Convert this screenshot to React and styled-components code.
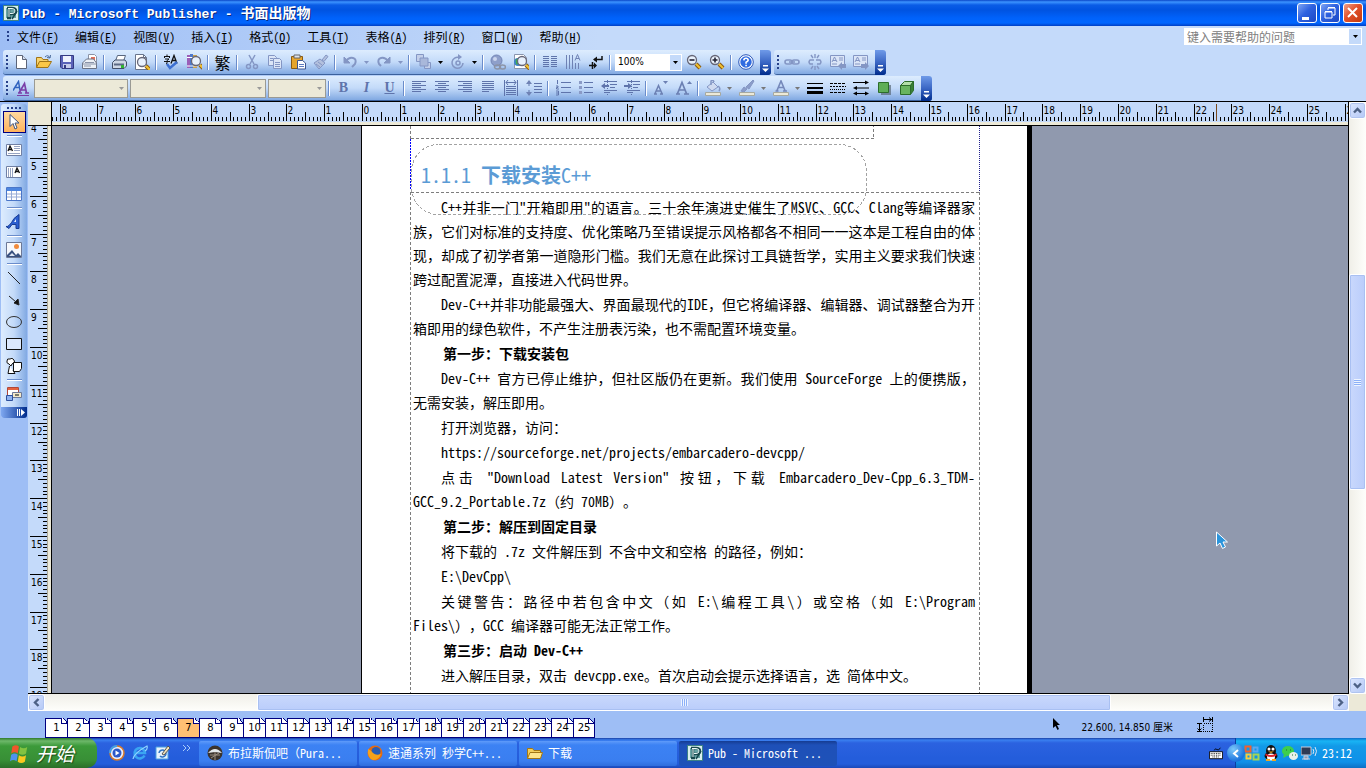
import React from 'react'
import styled, { createGlobalStyle, css } from 'styled-components'

/*=====================================================
Publisher window: title, menus, toolbars, page, taskbar
=====================================================*/

const cjk = '"Noto Sans CJK SC", sans-serif'
const tahoma = '"DejaVu Sans Condensed", "DejaVu Sans", "Noto Sans CJK SC", sans-serif'

const CM = 37.8

const menus = [
  ['文件', 'F'], ['编辑', 'E'], ['视图', 'V'], ['插入', 'I'], ['格式', 'O'],
  ['工具', 'T'], ['表格', 'A'], ['排列', 'R'], ['窗口', 'W'], ['帮助', 'H'],
]

//each paragraph is a list of lines, lines that end in | are justified
const paragraphs = [
  { lines: ['C++并非一门"开箱即用"的语言。三十余年演进史催生了MSVC、GCC、Clang等编译器家|', '族，它们对标准的支持度、优化策略乃至错误提示风格都各不相同一一这本是工程自由的体|', '现，却成了初学者第一道隐形门槛。我们无意在此探讨工具链哲学，实用主义要求我们快速|', '跨过配置泥潭，直接进入代码世界。'] },
  { lines: ['Dev-C++并非功能最强大、界面最现代的IDE，但它将编译器、编辑器、调试器整合为开|', '箱即用的绿色软件，不产生注册表污染，也不需配置环境变量。'] },
  { bold: true, lines: ['第一步：下载安装包'] },
  { lines: ['Dev-C++ 官方已停止维护，但社区版仍在更新。我们使用 SourceForge 上的便携版，|', '无需安装，解压即用。'] },
  { lines: ['打开浏览器，访问：'] },
  { lines: ['https://sourceforge.net/projects/embarcadero-devcpp/'] },
  { lines: ['点击 "Download Latest Version" 按钮，下载 Embarcadero_Dev-Cpp_6.3_TDM-|', 'GCC_9.2_Portable.7z（约 70MB）。'] },
  { bold: true, lines: ['第二步：解压到固定目录'] },
  { lines: ['将下载的 .7z 文件解压到 不含中文和空格 的路径，例如：'] },
  { lines: ['E:\\DevCpp\\'] },
  { lines: ['关键警告：路径中若包含中文（如 E:\\编程工具\\）或空格（如 E:\\Program|', 'Files\\），GCC 编译器可能无法正常工作。'] },
  { bold: true, lines: ['第三步：启动 Dev-C++'] },
  { lines: ['进入解压目录，双击 devcpp.exe。首次启动会提示选择语言，选 简体中文。'] },
]

const pages = Array.from({ length: 25 }, (_, i) => i + 1)

const GlobalStyle = createGlobalStyle`
  * { box-sizing: border-box; }
  body { margin: 0; overflow: hidden; }
  button, input, select {
    font: inherit;
    color: inherit;
    margin: 0;
    padding: 0;
    border: 0;
    border-radius: 0;
    background: none;
  }
  svg { display: block; flex: none; }
`

/*=====================================================
icons, all drawn on a 16 x 16 box
=====================================================*/

const off = '#8496c4'

const Lens = ({ x, y, sign }) => (
  <g>
    <path d={`M${x + 4} ${y + 4}l4 4`} stroke="#8a5a10" strokeWidth="4" />
    <path d={`M${x + 4} ${y + 4}l4 4`} stroke="#f2c230" strokeWidth="2" />
    <circle cx={x} cy={y} r="4.5" fill="#e8f1fc" stroke="#667" strokeWidth="1.3" />
    {sign && <path d={sign} stroke="#223" strokeWidth="1.6" />}
  </g>
)

const Lines = ({ rows, color = '#5f74ab' }) => (
  <g stroke={color} strokeWidth="1">
    {rows.map(([x1, x2, y]) => <path key={y} d={`M${x1} ${y + 0.5}H${x2}`} />)}
  </g>
)

const PubArt = () => (
  <g>
    <rect width="16" height="16" fill="#3d8286" />
    <path d="M1 1h14v14H1z" fill="#d9eeee" />
    <path d="M3 3h10v10H3z" fill="#68a3a5" />
    <path d="M4 13h4M6 13V3M4 3h5q4 0 4 3t-4 3H6" fill="none" stroke="#17484e" strokeWidth="2.4" />
    <path d="M6 12V4M5 3.500h4q3 0 3 2.500T9 8.500H7" fill="none" stroke="#eefafa" strokeWidth="1" />
    <path d="M9 14l5-8" stroke="#17484e" strokeWidth="1.5" />
  </g>
)

const art = {
  pub: <PubArt />,
  new: <g><path d="M3.500 1.500h6l4 4v9h-10z" fill="#fff" stroke="#5b6478" /><path d="M9.500 1.500v4h4" fill="#d5dff0" stroke="#5b6478" /></g>,
  open: <g><path d="M.5 13.500v-10h5l1.500 2h5v3" fill="#f9d36b" stroke="#a07416" /><path d="M.5 13.500l3-6h12l-3.500 6z" fill="#fbc746" stroke="#a07416" /><path d="M9 3q3-3 5 1m0 0l.5-3M14 4l-3-.5" fill="none" stroke="#4a6a9b" /></g>,
  save: <g><path d="M1.500 1.500h13v13H3l-1.500-1.500z" fill="#5a62b8" stroke="#343a82" /><path d="M4 2h8v6H4z" fill="#eef2fd" /><path d="M4 10h8v4H4z" fill="#c6ccea" /><path d="M5 11h2v3H5z" fill="#343a82" /></g>,
  mail: <g><path d="M6.500 5V.5h6l2 2V9h-8z" fill="#fff" stroke="#8b93a6" /><path d="M9 3h4v3H9z" fill="#e2715c" /><path d="M.5 14.500V9l4-4h7l3 4v5.500z" fill="#edf1f7" stroke="#6b7385" /><path d="M3 8.500h9M.5 10h14M2 12h7" stroke="#8993a8" /></g>,
  print: <g><path d="M4.500 7l2-5.500h8L12.500 7z" fill="#fff" stroke="#59677f" /><path d="M1.500 8.500L4 6h10l1.500 2v4L13 14.500H1.500z" fill="#cfd8e6" stroke="#43506a" /><path d="M3 10.500h10" stroke="#5c6a85" strokeWidth="2" /><path d="M10 11h3v3h-3z" fill="#31b531" /></g>,
  preview: <g><path d="M1.500.5h8l3 3v12h-11z" fill="#fff" stroke="#69758c" /><path d="M9.500.5v3h3" fill="none" stroke="#69758c" /><Lens x={8} y={8} /></g>,
  spell: <g><path d="M1 2.500h6M4 .5v2M1.500 2v2M6.500 2v2M2 5h4L4 6.500v3l-1 .5M1 7.500h6" stroke="#111" fill="none" /><path d="M8 9.500l3-8 3 8M9 6.500h4" stroke="#111" fill="none" strokeWidth="1.3" /><path d="M4 10l3 4 7-6" stroke="#3c6fd1" fill="none" strokeWidth="2.500" /></g>,
  research: <g><path d="M1 1h3v13H1z" fill="#9a5fb8" /><path d="M4 0h3v14H4z" fill="#4e78c8" /><path d="M7 1h4v13H7z" fill="#c9a14c" /><path d="M1 3.500h10M1 12h10" stroke="#fff" /><Lens x={10} y={7} /></g>,
  cut: <g stroke={off} fill="none" strokeWidth="1.500"><path d="M5 1l5 9M11 1L6 10" /><circle cx="4.500" cy="12.500" r="2" /><circle cx="11.500" cy="12.500" r="2" /></g>,
  copy: <g fill="#dbe5f7" stroke={off}><path d="M1.500 1.500h6l2 2v8h-8z" /><path d="M6.500 4.500h6l2 2v8h-8z" /><path d="M3 4.500h3M3 6.500h3M8 8.500h5M8 10.500h5M8 12.500h5" /></g>,
  paste: <g><path d="M1.500 2.500h11v12h-11z" fill="#e6a52d" stroke="#8a5b12" /><path d="M4 1h6v3H4z" fill="#dfe3ea" stroke="#666" /><path d="M7.500 6.500h5l3 2.500v6h-8z" fill="#fff" stroke="#3d5591" /><path d="M9 10.500h5M9 12.500h5" stroke="#5e7ac0" /></g>,
  brush: <g fill="#b3c0dd" stroke={off}><path d="M9 6l4-5 2 1.500-4 5z" /><path d="M1 9l6-4 5 4-6 6z" /><path d="M3 10l4 3M5 8l4 3" /></g>,
  undo: <g fill="none" stroke={off}><path d="M4 7q3-4 7-3t2 6l-3 3" strokeWidth="2" /><path d="M2 3v6h6z" fill={off} /></g>,
  redo: <g fill="none" stroke={off}><path d="M12 7Q9 3 5 4T3 10l2 2" strokeWidth="2" /><path d="M14 3v6H8z" fill={off} /></g>,
  bring: <g fill="#c3cfe9" stroke={off}><path d="M.5.5h7v7h-7zM8.500 8.500h6v6h-6z" /><path d="M4 4h8v8H4z" fill="#a9b8da" /></g>,
  rotate: <g fill="none" stroke={off} strokeWidth="1.500"><path d="M9 3.500A5.500 5.500 0 1 0 13 9" /><circle cx="8" cy="9" r="2" /><path d="M8 0v6l4-3z" fill={off} stroke="none" /></g>,
  globelink: <g><circle cx="6.500" cy="6.500" r="5.500" fill="#8e9fca" stroke="#7183b5" /><circle cx="5" cy="5" r="2" fill="#cad5ee" /><ellipse cx="7.500" cy="13" rx="3" ry="2" fill="none" stroke="#8b93a6" strokeWidth="1.500" /><ellipse cx="12.500" cy="13" rx="3" ry="2" fill="none" stroke="#8b93a6" strokeWidth="1.500" /></g>,
  globedoc: <g><path d="M1.500.5h9l3 3v11h-12z" fill="#fff" stroke="#8995ae" /><circle cx="5" cy="8" r="4" fill="#3e81cf" /><path d="M3 5q3-1 4 2l-3 4q-2-2-1-6" fill="#3fae4f" /><Lens x={9} y={7} /></g>,
  columns: <g><Lines rows={[[1, 7, 2], [1, 7, 4], [1, 7, 6], [1, 7, 8], [1, 7, 10], [1, 7, 12]]} /><Lines rows={[[9, 15, 2], [9, 15, 4], [9, 15, 6], [9, 15, 8], [9, 15, 10], [9, 15, 12]]} /></g>,
  vertical: <g stroke="#6f82b4" fill="none"><path d="M1.500 1v14M4.500 1v14M7.500 1v14M10.500 9v6M13.500 9v6" /><path d="M10 6.500l2.500-6 2.500 6M11 4.500h3" /></g>,
  connect: <g stroke="#111" fill="none"><path d="M6.500 5.500h7.500V2M1 11.500h7M4.500 8v7" strokeWidth="1.500" /><path d="M5 5.500l4-3v6zM9 11.500l-3-3v6z" fill="#111" stroke="none" /></g>,
  zoomout: <Lens x={6} y={6} sign="M3.500 6h5" />,
  zoomin: <Lens x={6} y={6} sign="M3.500 6h5M6 3.500v5" />,
  help: <g><circle cx="8" cy="8" r="7.300" fill="#fff" stroke="#2a56b8" /><circle cx="8" cy="8" r="5.700" fill="#2f6be0" /><path d="M5.800 6.300Q6 4.300 8 4.300t2.200 1.900Q10 7.500 8.100 8.300v1.400M8.100 10.700v1.500" fill="none" stroke="#fff" strokeWidth="1.600" /></g>,
  link: <g fill="none" stroke={off} strokeWidth="1.600"><rect x="1" y="6" width="7" height="4" rx="2" /><rect x="8" y="6" width="7" height="4" rx="2" /><path d="M5 8h6" /></g>,
  unlink: <g fill="none" stroke={off} strokeWidth="1.400"><path d="M7 6H3q-2 2 0 4h3M9 6h4q2 2 0 4h-3M8 0v4M4 1l2 3M12 1l-2 3M8 12v4M4 15l2-3M12 15l-2-3" /></g>,
  prevbox: <g><path d="M.5 1.500h14v11H.5z" fill="#dbe5f7" stroke={off} /><path d="M2 8l2.500-5L7 8M3 6.500h3M9 4h4M9 6h4M2 10h5" fill="none" stroke={off} /><path d="M16 10v4h-4v2l-4-4 4-4v2z" fill={off} /></g>,
  nextbox: <g><path d="M.5 1.500h14v11H.5z" fill="#dbe5f7" stroke={off} /><path d="M2 8l2.500-5L7 8M3 6.500h3M9 4h4M9 6h4M2 10h5" fill="none" stroke={off} /><path d="M8 10v4h4v2l4-4-4-4v2z" fill={off} /></g>,
  styles: <g fill="none"><path d="M0 10.500L5.500 1.500 7 10.500M2.500 7.500h4" stroke="#2f62bf" strokeWidth="1.500" /><path d="M6 13L11.500 3.500 13.500 13M8 10h5M5 13h4M12 13h4" stroke="#7a3fa8" strokeWidth="1.700" /><path d="M4 15.500h12" stroke="#7a3fa8" /></g>,
  left: <Lines rows={[[1, 15, 1], [1, 10, 3], [1, 15, 5], [1, 10, 7], [1, 15, 9], [1, 10, 11]]} />,
  center: <Lines rows={[[1, 15, 1], [4, 12, 3], [1, 15, 5], [4, 12, 7], [1, 15, 9], [4, 12, 11]]} />,
  right: <Lines rows={[[1, 15, 1], [6, 15, 3], [1, 15, 5], [6, 15, 7], [1, 15, 9], [6, 15, 11]]} />,
  justify: <Lines rows={[[2, 14, 1], [2, 14, 3], [2, 14, 5], [2, 14, 7], [2, 14, 9], [2, 9, 11]]} />,
  distribute: <g><path d="M1.500 0v16M14.500 0v16M3 2.500h10M5 0L3 2.500 5 5M11 0l2 2.500L11 5" stroke="#5f74ab" fill="none" /><Lines rows={[[3, 13, 6], [3, 13, 8], [3, 13, 10], [3, 13, 12], [3, 13, 14]]} /></g>,
  spacing: <g><path d="M3 1v14" stroke="#5f74ab" strokeDasharray="5 4" /><path d="M0 4l3-4 3 4zM0 12l3 4 3-4z" fill="#6f82b4" /><Lines rows={[[8, 16, 3], [8, 16, 6], [8, 16, 9], [8, 16, 12]]} /></g>,
  numbers: <g><Lines rows={[[6, 16, 2], [6, 16, 7], [6, 16, 12]]} /><path d="M2.500 0v4M1 6h2v1.500H1.500V9H4M1 11h2.500v4H1M1 13h2" fill="none" stroke="#5f74ab" /></g>,
  bullets: <g><Lines rows={[[6, 15, 2], [6, 15, 7], [6, 15, 12]]} /><path d="M1 1h3v3H1zM1 6h3v3H1zM1 11h3v3H1z" fill="#8a9ac6" /></g>,
  outdent: <g><Lines rows={[[3, 16, 1], [9, 16, 4], [9, 14, 7], [3, 16, 10], [3, 9, 12]]} /><path d="M0 6l4-3v2h4v2H4v2z" fill="#5f74ab" /><path d="M6.500 0v15" stroke="#5f74ab" strokeDasharray="1 1" /></g>,
  indent: <g><Lines rows={[[3, 16, 1], [9, 16, 4], [9, 14, 7], [3, 16, 10], [3, 9, 12]]} /><path d="M8 6L4 3v2H0v2h4v2z" fill="#5f74ab" /><path d="M7.500 0v15" stroke="#5f74ab" strokeDasharray="1 1" /></g>,
  shrink: <g><path d="M2 13.500l3.500-8 3.500 8M3.500 11h4M1 14h3M7 14h3" fill="none" stroke="#6c80b3" strokeWidth="1.500" /><path d="M10 1h5l-2.500 3z" fill="#6c80b3" /></g>,
  grow: <g><path d="M1.500 13.500l4.500-11 4.500 11M3 10h6M0 14h4M8 14h5" fill="none" stroke="#6c80b3" strokeWidth="1.700" /><path d="M11 4h5l-2.500-3z" fill="#6c80b3" /></g>,
  fill: <g><path d="M2 7l6-5 5 5-6 4z" fill="#cfdaf0" stroke={off} /><path d="M6 5V1q2-2 3 1M13 6q3 2 1 5" fill="none" stroke={off} strokeWidth="1.500" /><path d="M.5 12.500h15v3H.5z" fill="#ece9d8" stroke="#a7a9a0" /></g>,
  line: <g><path d="M2 11l3-4 3 2-3 3zM7 7l7-7 1 1-5 8z" fill="#8b9dc9" stroke={off} /><path d="M.5 12.500h15v3H.5z" fill="#ece9d8" stroke="#a7a9a0" /></g>,
  font: <g><path d="M4 10.500L8 1l4 9.500M5.500 7.500h5M2.500 11h3M10 11h4" fill="none" stroke="#7588ba" strokeWidth="1.600" /><path d="M.5 12.500h15v3H.5z" fill="#ece9d8" stroke="#a7a9a0" /></g>,
  weight: <path d="M0 3h16v1H0zM0 7h16v2H0zM0 11h16v3H0z" fill="#000" />,
  dash: <g stroke="#000"><path d="M0 3.500h16M0 12.500h16" strokeDasharray="3 1" /><path d="M0 6.500h16" strokeDasharray="2 1" /><path d="M0 9.500h16" strokeDasharray="1 1" /></g>,
  arrows: <g stroke="#000" fill="#000"><path d="M0 2.500h14M2 8h14M1 13.500h14" /><path d="M16 2.500l-4-2v4zM0 8l4-2v4zM0 13.500l4-2v4zM16 13.500l-4-2v4z" stroke="none" /></g>,
  shadow: <g><path d="M5 5h10v10H5z" fill="#5a6a78" opacity=".7" /><path d="M2.500 2.500h10v10h-10z" fill="#5fae57" stroke="#2c6d2a" /></g>,
  cube: <g stroke="#2c6d2a"><path d="M1.500 5.500l4-4h9l-3 4z" fill="#b3dfa8" /><path d="M11.500 5.500l3-4v9l-3 4z" fill="#387f35" /><path d="M1.500 5.500h10v9h-10z" fill="#69b560" /></g>,
  pointer: <path d="M4 .5v12l3-3 2 5.500 2-1-2-5h4z" fill="#fff" stroke="#3e5480" />,
  textbox: <g><path d="M.5 2.500h15v11H.5z" fill="#fff" stroke="#7080a5" /><path d="M2 9l2-5 2.500 5M3 7.500h3" stroke="#111" fill="none" strokeWidth="1.300" /><path d="M8 4.500h6M8 6.500h6M8 8.500h6M2 11.500h12" stroke="#97a4c2" /></g>,
  vtextbox: <g><path d="M.5 2.500h15v11H.5z" fill="#fff" stroke="#7080a5" /><path d="M9 9l2-5 2.500 5M10 7.500h3" stroke="#111" fill="none" strokeWidth="1.300" /><path d="M2.500 4v9M4.500 4v9M6.500 4v9" stroke="#97a4c2" /></g>,
  table: <g><path d="M.5 1.500h15v13H.5z" fill="#fff" stroke="#4a76c8" /><path d="M1 2h14v3H1z" fill="#4d86e0" /><path d="M1 8h14M1 11h14M5.500 5v9M10.500 5v9" stroke="#97abd6" /></g>,
  wordart: <g><path d="M0 12.500q3 1 8-8l5-4v14h-3v-4H6l-3 4z" fill="#2c5fd0" stroke="#173b94" /><path d="M8 8l2-3v3z" fill="#e4eefd" /></g>,
  picture: <g><path d="M.5.5h15v15H.5z" fill="#f6f8fc" stroke="#6c7896" /><circle cx="10.500" cy="4.500" r="2.500" fill="#f08a3c" /><path d="M1 13l5-5 4 5 2-2 3 3v1H1z" fill="#38507f" /><path d="M3 14l3-3 3 3z" fill="#dfe6f4" /></g>,
  drawline: <path d="M2 2l12 12" stroke="#222" />,
  drawarrow: <g stroke="#222" fill="#111"><path d="M3 4l7 6" /><path d="M8 11l4-4 1 6z" /></g>,
  ellipse: <ellipse cx="8" cy="8" rx="7.500" ry="5.500" fill="none" stroke="#333" />,
  rect: <path d="M.5 2.500h15v11H.5z" fill="#dbe8fd" stroke="#111" />,
  autoshape: <g fill="#fff" stroke="#111"><path d="M1 3q0-3 3-2 2-2 4 1 2 2-2 4l-1 2-2-2Q0 5 1 3z" /><path d="M3.500 8l-1.500 7.500h7l-2-3" /><path d="M7.500 4.500h8v6l-2 3h-6z" /></g>,
  library: <g><path d="M1.500 1.500h11v8h-11z" fill="#fff" stroke="#b0483a" /><path d="M2 2h10v2H2z" fill="#e4633f" /><path d="M6.500 6.500h9v5h-9z" fill="#f6e9c8" stroke="#6c7896" /><path d="M.5 9.500h6v5h-6z" fill="#8fb2ee" stroke="#2d4f9c" /><path d="M9 8h4v2H9z" fill="#7b7b6b" /></g>,
  player: <g><circle cx="8" cy="8" r="7" fill="#e9eefb" stroke="#d77a2c" strokeWidth="1.500" /><path d="M1 8a7 7 0 0 1 7-7" stroke="#3fa0e8" strokeWidth="2" fill="none" /><circle cx="8" cy="8" r="4.500" fill="#2b58c9" /><path d="M6.500 5.500v5l4-2.500z" fill="#fff" /></g>,
  ie: <g><path d="M12.500 10.500A5.200 5.200 0 1 1 13 8H4" fill="none" stroke="#3aa5f2" strokeWidth="2.600" /><path d="M1 14Q2 8 15 1q1 3-2 5" fill="none" stroke="#8fd4ff" strokeWidth="1.200" /></g>,
  desktop: <g><path d="M1 2h12v12H1z" fill="#e6f3fd" stroke="#4aa0df" /><path d="M4 8a3.500 3.500 0 1 1 1 3" fill="none" stroke="#2f74c4" strokeWidth="1.500" /><path d="M7 9l6-8 2 2-6 7z" fill="#f4e6bc" stroke="#555" /></g>,
  bomb: <g><circle cx="8" cy="8" r="7.500" fill="#3c342e" /><path d="M1 8Q8 0 15 8L8 7z" fill="#e5e9ec" /><path d="M3 10h10M8 7v8M4 13l8-5" stroke="#9a8e80" /></g>,
  firefox: <g><circle cx="8" cy="8" r="7.500" fill="#e56a12" /><circle cx="9" cy="6.500" r="4.500" fill="#2a5db3" /><path d="M1 4q3 1 5 4 3 3 8 1-2 6-8 6Q0 13 1 4z" fill="#f7a21b" /></g>,
  folder: <g><path d="M.5 13.500v-10h5l1.500 2h6.500v8z" fill="#f4cf5c" stroke="#a27616" /><path d="M.5 13.500l2.500-6h12.500l-2 6z" fill="#fde48c" stroke="#a27616" /></g>,
  office: <g fill="none" strokeWidth="2"><path d="M1.500 1.500h5v5h-5z" stroke="#f4602b" /><path d="M9.500 2.500h4v4h-4z" stroke="#5aa8f0" /><path d="M2.500 9.500h4v4h-4z" stroke="#f9cc3e" /><path d="M9.500 9.500h5v5h-5z" stroke="#a4d455" /></g>,
  penguin: <g><ellipse cx="8" cy="6" rx="5" ry="6" fill="#111" /><ellipse cx="8" cy="11" rx="6.500" ry="4" fill="#111" /><ellipse cx="8" cy="12" rx="4" ry="3.500" fill="#fff" /><circle cx="6" cy="4" r="1.500" fill="#fff" /><circle cx="10" cy="4" r="1.500" fill="#fff" /><path d="M5 6.500h6L8 8z" fill="#f6a81c" /><path d="M2.500 8.500q5 3 11 0v2q-5 3-11 0z" fill="#e3262c" /><path d="M3 15h4M9 15h4" stroke="#f6a81c" strokeWidth="2" /></g>,
  wechat: <g><ellipse cx="6" cy="6" rx="6" ry="5" fill="#3dcf4e" /><path d="M2 9l-1 4 4-2z" fill="#3dcf4e" /><ellipse cx="11.500" cy="11" rx="4.500" ry="4" fill="#e9f1ea" /><path d="M4 5h1M8 5h1M10 10h1M13 10h1" stroke="#246c2e" /></g>,
  network: <g><path d="M0 2h10v8H0z" fill="#2e3b55" stroke="#c6cfe0" /><path d="M3 11h4v3H3zM1 14h8" stroke="#c6cfe0" fill="#8d99b3" /><path d="M12 4q1.500 2 0 5M14 2q3 4 0 9" fill="none" stroke="#dbe5f4" /></g>,
  keyboard: <g><path d="M.5 6.500h15v8H.5z" fill="#fff" stroke="#000" /><path d="M2 8.500h12M2 10.500h12M4 12.500h8" stroke="#000" strokeDasharray="1 1" /><path d="M6 5q1-3 3-1t4-2" stroke="#000" fill="none" /></g>,
  flag: <g><path d="M2 2q3-2 5.500 0L6.500 8Q4 6 1 8z" fill="#f0562b" /><path d="M8.500 2.500q3 2 6 0l-1 5.500q-3 2-6 0z" fill="#83c341" /><path d="M1 9q3-2 5.500 0l-1 5.500Q3 12.500 0 14.500z" fill="#4f92ee" /><path d="M7.500 9.500q3 2 6 0l-1 5.500q-3 2-6 0z" fill="#fbc91f" /></g>,
  size: <g stroke="#000" fill="none"><path d="M6.500 0v5M15.500 0v5M7 2.500h8M12 .5l2.500 2-2.500 2M0 6.500h5M0 14.500h5M2.500 7v7M.5 11.500l2 2 2-2" /><path d="M6.500 6.500h9v8h-9z" strokeDasharray="1 1" shapeRendering="crispEdges" /></g>,
}

const Icon = ({ name, size = 16 }) => (
  <svg width={size} height={size} viewBox="0 0 16 16" aria-hidden="true">{art[name]}</svg>
)

const Chevron = ({ turn = 0 }) => (
  <svg width="9" height="9" viewBox="0 0 9 9">
    <path d="M1 6.500l3.500-3.500L8 6.500" transform={`rotate(${turn} 4.5 4.5)`} fill="none" stroke="#4d6185" strokeWidth="2.400" />
  </svg>
)

const Drop = ({ color = '#000' }) => (
  <svg width="5" height="3" viewBox="0 0 5 3"><path d="M0 0h5L2.500 3z" fill={color} /></svg>
)

const More = () => (
  <svg width="7" height="8" viewBox="0 0 7 8"><path d="M1 0h5v1.500H1zM0 3.500h7L3.500 7z" fill="#fff" /></svg>
)

/*=====================================================
toolbars, a string is a button, the rest are objects
=====================================================*/

const standardBar = [
  'new', 'open', 'save', 'mail', '-', 'print', 'preview', '-', 'spell', 'research', '-',
  { text: '繁', label: '繁体' }, '-', 'cut', 'copy', 'paste', 'brush', '-',
  'undo', { drop: off }, 'redo', { drop: off }, '-', 'bring', { drop: '#000' }, 'rotate', { drop: '#000' }, '-',
  'globelink', 'globedoc', '-', 'columns', 'vertical', 'connect', '-',
  { zoom: true }, 'zoomout', 'zoomin', '-', 'help',
]

const linkBar = ['link', 'unlink', 'prevbox', 'nextbox']

const formatBar = [
  'styles', { combo: 94, label: '样式' }, { combo: 136, label: '字体' }, { combo: 58, label: '字号' }, '-',
  { text: 'B', label: '加粗', look: 'bold' }, { text: 'I', label: '倾斜', look: 'italic' }, { text: 'U', label: '下划线', look: 'under' }, '-',
  'left', 'center', 'right', 'justify', 'distribute', 'spacing', '-',
  'numbers', 'bullets', 'outdent', 'indent', '-', 'shrink', 'grow', '-',
  'fill', { drop: '#777' }, 'line', { drop: '#777' }, 'font', { drop: '#777' },
  'weight', 'dash', 'arrows', 'shadow', 'cube',
]

const toolbox = [
  'pointer', '-', 'textbox', 'vtextbox', 'table', '-', 'wordart', '-', 'picture', '-',
  'drawline', 'drawarrow', 'ellipse', 'rect', 'autoshape', '-', 'library',
]

const BarItem = ({ item }) => {
  if (item === '-') return <Divider />
  if (typeof item === 'string') return <Tool aria-label={item}><Icon name={item} /></Tool>
  if (item.drop) return <DropTool aria-label="更多"><Drop color={item.drop} /></DropTool>
  if (item.combo) {
    return (
      <Combo $w={item.combo} $off>
        <select disabled aria-label={item.label}><option> </option></select>
        <Drop color="#999" />
      </Combo>
    )
  }
  if (item.zoom) {
    return (
      <Combo $w={67}>
        <select aria-label="显示比例" defaultValue="100%"><option>100%</option></select>
        <DropFace><Drop /></DropFace>
      </Combo>
    )
  }
  return <TextTool aria-label={item.label} $look={item.look}>{item.text}</TextTool>
}

const ToolBar = ({ items }) => (
  <Bar>
    <Grip />
    {items.map((item, i) => <BarItem key={i} item={item} />)}
    <BarEnd aria-label="工具栏选项"><More /></BarEnd>
  </Bar>
)

/*=====================================================
rulers, ticks every millimetre and a label every cm
=====================================================*/

const tickStart = (n) => (n % 10 === 0 ? 2 : n % 5 === 0 ? 10 : 15)

const TopRuler = () => {
  const ticks = []
  for (let n = -82; n <= 264; n++) {
    const x = Math.round(310 + (n * CM) / 10) + 0.5
    ticks.push(<path key={n} d={`M${x} ${tickStart(n)}V19`} stroke="#000" />)
    if (n % 10 === 0) ticks.push(<text key={`t${n}`} x={x + 1} y="12">{Math.abs(n / 10)}</text>)
  }
  return <RulerArt height="20">{ticks}<path d="M1164.500 2v17" stroke="#7a4a20" /></RulerArt>
}

const SideRuler = () => {
  const ticks = []
  for (let n = 39; n <= 200; n++) {
    const y = Math.round(-157 + (n * CM) / 10) + 0.5
    ticks.push(<path key={n} d={`M${tickStart(n)} ${y}H19`} stroke="#000" />)
    if (n % 10 === 0) ticks.push(<text key={`t${n}`} x="3" y={y + 11}>{n / 10}</text>)
  }
  return <RulerArt height="100%">{ticks}</RulerArt>
}

//frame edges that show around text boxes while editing
const Guides = () => (
  <GuideArt aria-hidden="true">
    <g fill="none" stroke="#7d7d7d" strokeDasharray="3 2">
      <path d="M48.500 0v12.500M48.500 12.500H511.500V0" />
      <path d="M48.500 66.500H617.500" />
      <rect x="49.500" y="18.500" width="455" height="70" rx="27" stroke="#a2a2a2" />
    </g>
    <g stroke="#7d7d7d" strokeDasharray="3 2">
      <line x1="48.500" x2="48.500" y1="66" y2="100%" />
      <line x1="617.500" x2="617.500" y1="66" y2="100%" />
    </g>
    <path d="M48.500 13v50" stroke="#0000ff" strokeDasharray="2 1" />
    <path d="M617.500 0v66" stroke="#20208c" strokeDasharray="1 1" />
  </GuideArt>
)

//latin runs take the half width glyphs, full width punctuation stays as it is
const mix = (text) => text.split(/([\x20-\x7e]+)/).map((run, i) => (
  i % 2 ? <Half key={i}>{run}</Half> : run
))

const Para = ({ lines, bold }) => (
  <Paragraph $bold={bold}>
    {lines.map((line) => (
      <Line key={line} $fill={line.endsWith('|')}>{mix(line.replace('|', ''))}</Line>
    ))}
  </Paragraph>
)

export default function App() {
  return (
    <Window>
      <GlobalStyle />
      <TitleBar>
        <Icon name="pub" />
        <Title>Pub - Microsoft Publisher - <b>书面出版物</b></Title>
        <Caption aria-label="最小化"><svg width="20" height="20"><path d="M5 14h7v3H5z" fill="#fff" /></svg></Caption>
        <Caption aria-label="还原"><svg width="20" height="20"><path d="M8 7V5h7v7h-2M5 9h7v6H5zM5 8.500h7M8 4.500h7" fill="none" stroke="#fff" /></svg></Caption>
        <Caption $close aria-label="关闭"><svg width="20" height="20"><path d="M5 5l9 9M14 5l-9 9" stroke="#fff" strokeWidth="2" /></svg></Caption>
      </TitleBar>

      <Dock>
        <MenuBar>
          <Grip $plain />
          {menus.map(([name, key]) => (
            <MenuItem key={key}>{name}<Half>(<u>{key}</u>)</Half></MenuItem>
          ))}
          <AskBox>
            <input aria-label="键入需要帮助的问题" placeholder="键入需要帮助的问题" />
            <AskDrop aria-label="展开"><Drop /></AskDrop>
          </AskBox>
        </MenuBar>
        <BarRow>
          <ToolBar items={standardBar} />
          <ToolBar items={linkBar} />
        </BarRow>
        <BarRow><ToolBar items={formatBar} /></BarRow>
      </Dock>

      <Work>
        <ToolBox>
          <BoxGrip />
          {toolbox.map((name, i) => name === '-'
            ? <BoxDivider key={i} />
            : <BoxTool key={i} aria-label={name} $on={name === 'pointer'}><Icon name={name} /></BoxTool>)}
          <BoxEnd aria-label="工具栏选项"><svg width="8" height="7"><path d="M0 0h1v7H0zM2 0h1v7H2zM4 0l4 3.500L4 7z" fill="#fff" /></svg></BoxEnd>
        </ToolBox>
        <Editor>
          <Corner />
          <TopStrip><TopRuler /></TopStrip>
          <SideStrip><SideRuler /></SideStrip>
          <Canvas>
            <Sheet>
              <Guides />
              <Heading>{mix('1.1.1 下载安装C++')}</Heading>
              {paragraphs.map((p) => <Para key={p.lines[0]} {...p} />)}
            </Sheet>
          </Canvas>
          <HScroll>
            <ScrollButton aria-label="向左"><Chevron turn={-90} /></ScrollButton>
            <Track $grow={212} />
            <Thumb $grow={854} $across />
            <Track $grow={221} />
            <ScrollButton aria-label="向右"><Chevron turn={90} /></ScrollButton>
          </HScroll>
        </Editor>
        <VScroll>
          <ScrollButton aria-label="向上"><Chevron /></ScrollButton>
          <Track $grow={156} />
          <Thumb $grow={215} />
          <Track $grow={188} />
          <ScrollButton aria-label="向下"><Chevron turn={180} /></ScrollButton>
          <ScrollCorner />
        </VScroll>
      </Work>

      <PageBar>
        {pages.map((n) => <PageTab key={n} $on={n === 7}>{n}</PageTab>)}
        <Status>
          <svg width="9" height="13"><path d="M1 0v10l2.500-2 2 4 1.500-1-2-4h3z" fill="#000" /></svg>
          <Position>22.600, 14.850 厘米</Position>
          <Icon name="size" />
        </Status>
      </PageBar>

      <TaskBar>
        <Start><Icon name="flag" size={19} />开始</Start>
        <Quick aria-label="播放器"><Icon name="player" /></Quick>
        <Quick aria-label="浏览器"><Icon name="ie" /></Quick>
        <Quick aria-label="显示桌面"><Icon name="desktop" /></Quick>
        <QuickMore aria-label="更多图标"><svg width="9" height="6"><path d="M1 0l3 3-3 3M5 0l3 3-3 3" fill="none" stroke="#a9cdfb" /></svg></QuickMore>
        <Task><Icon name="bomb" /><span>{mix('布拉斯侃吧（Pura...')}</span></Task>
        <Task><Icon name="firefox" /><span>{mix('速通系列 秒学C++...')}</span></Task>
        <Task><Icon name="folder" />下载</Task>
        <Task $on><Icon name="pub" /><span>{mix('Pub - Microsoft ...')}</span></Task>
        <Input><Icon name="keyboard" size={14} /></Input>
        <Tray>
          <TrayArrow aria-label="显示图标"><svg width="8" height="9"><path d="M6 1L2 4.500 6 8" fill="none" stroke="#fff" strokeWidth="2" /></svg></TrayArrow>
          <Icon name="office" />
          <Icon name="penguin" />
          <Icon name="wechat" />
          <Icon name="network" />
          <Clock>{mix('23:12')}</Clock>
        </Tray>
      </TaskBar>

      <Cursor width="13" height="19" viewBox="0 0 13 19">
        <path d="M.5 1v14l3.500-3 2.500 5.500 3-1.500L7 11h4.500z" fill="#2b95dc" stroke="#fff" />
      </Cursor>
    </Window>
  )
}

/*=====================================================
styles
=====================================================*/

const Window = styled.div`
  position: relative;
  display: flex;
  flex-direction: column;
  height: 100vh;
  font: 12px/16px ${cjk};
  color: #000;
  background: #9ebef5;
`

const Half = styled.span`
  font-feature-settings: "hwid";
`

const TitleBar = styled.header`
  display: flex;
  align-items: center;
  gap: 3px;
  height: 26px;
  flex: none;
  padding: 0 3px;
  background: linear-gradient(#0a46c8 0, #3c93ff 2px, #0a5ce6 5px, #0053e1 10px, #0062fb 18px, #0066ff 23px, #003fc4 26px);
`

const Title = styled.h1`
  flex: 1;
  margin: 0;
  font: bold 13px/18px "Liberation Mono", monospace;
  color: #fff;
  text-shadow: 1px 1px #0a2a80;
  b { font: bold 14px/18px ${cjk}; }
`

const Caption = styled.button`
  width: 20px;
  height: 20px;
  border: 1px solid #fff;
  border-radius: 3px;
  background: ${(p) => p.$close
    ? 'linear-gradient(135deg, #f0a088, #e2512a 45%, #c23a10)'
    : 'linear-gradient(135deg, #7fa5f4, #2f62e0 45%, #1c48c4)'};
  svg { margin: -1px; }
`

const Dock = styled.div`
  flex: none;
  background: linear-gradient(90deg, #9ebef5, #c4dafa 600px);
  border-bottom: 1px solid #000;
`

const MenuBar = styled.nav`
  display: flex;
  align-items: center;
  height: 24px;
  padding: 0 4px 3px;
`

const MenuItem = styled.button`
  padding: 0 8px;
  white-space: nowrap;
`

const AskBox = styled.div`
  display: flex;
  width: 178px;
  height: 17px;
  margin-left: auto;
  background: #fff;
  input {
    flex: 1;
    min-width: 0;
    padding-left: 3px;
    line-height: 15px;
  }
  input::placeholder { color: #808080; opacity: 1; }
`

const AskDrop = styled.button`
  display: grid;
  place-items: center;
  width: 12px;
  margin: 1px;
  background: #c4dafa;
`

const BarRow = styled.div`
  display: flex;
  gap: 3px;
  height: 26px;
  padding-left: 3px;
  &:last-child { height: 25px; }
`

const Bar = styled.div`
  display: flex;
  align-items: center;
  height: 25px;
  border-radius: 3px;
  border-bottom: 1px solid #3b619c;
  background: linear-gradient(#ddecfe, #c3daf9 50%, #81a9e2);
`

const Grip = styled.span`
  width: ${(p) => (p.$plain ? 5 : 6)}px;
  height: ${(p) => (p.$plain ? 11 : 15)}px;
  background: repeating-linear-gradient(#27418a 0 2px, transparent 2px 4px) 3px 0 / 2px 100% no-repeat;
`

const Tool = styled.button`
  display: grid;
  place-items: center;
  width: 23px;
  height: 23px;
`

const TextTool = styled(Tool)`
  font: 16px/22px ${cjk};
  ${(p) => p.$look && css`
    font: bold 14px/22px "Liberation Serif", serif;
    color: #5f74ab;
    font-style: ${p.$look === 'italic' ? 'italic' : 'normal'};
    text-decoration: ${p.$look === 'under' ? 'underline' : 'none'};
  `}
`

const DropTool = styled.button`
  display: grid;
  place-items: center;
  width: 11px;
  height: 23px;
`

const Divider = styled.span`
  width: 2px;
  height: 15px;
  margin: 0 2px;
  background: linear-gradient(90deg, #6a8ccb 50%, #fff 50%);
`

const Combo = styled.span`
  display: flex;
  align-items: center;
  width: ${(p) => p.$w}px;
  height: ${(p) => (p.$off ? 19 : 17)}px;
  margin-left: 2px;
  padding-right: ${(p) => (p.$off ? 3 : 1)}px;
  border: ${(p) => (p.$off ? '1px solid #9a9a94' : '0')};
  background: ${(p) => (p.$off ? '#ece9d8' : '#fff')};
  select {
    flex: 1;
    min-width: 0;
    height: 16px;
    padding-left: 3px;
    appearance: none;
    font: 10px/14px ${tahoma};
  }
`

const DropFace = styled.span`
  display: grid;
  place-items: center;
  width: 11px;
  height: 15px;
  background: #c4dafa;
`

const BarEnd = styled.button`
  display: flex;
  align-items: flex-end;
  justify-content: center;
  width: 11px;
  height: 25px;
  margin: 0 0 -1px 3px;
  padding-bottom: 2px;
  border-radius: 0 3px 3px 0;
  background: linear-gradient(#6f9ae8, #3a66c4 50%, #002c8c);
`

const Work = styled.div`
  display: flex;
  flex: 1;
  min-height: 0;
`

const ToolBox = styled.div`
  display: flex;
  flex-direction: column;
  align-items: center;
  align-self: flex-start;
  width: 26px;
  margin: 2px 1px 0;
  border-radius: 3px;
  background: linear-gradient(90deg, #ddecfe, #c3daf9 50%, #81a9e2);
`

const BoxGrip = styled.span`
  width: 15px;
  height: 2px;
  margin: 3px 0 2px;
  background: repeating-linear-gradient(90deg, #27418a 0 2px, transparent 2px 4px);
`

const BoxTool = styled.button`
  display: grid;
  place-items: center;
  width: 23px;
  height: 22px;
  ${(p) => p.$on && css`
    border: 1px solid #000080;
    background: linear-gradient(#ffd9a0, #ffb35c);
  `}
`

const BoxDivider = styled.span`
  width: 15px;
  height: 2px;
  margin: 2px 0;
  background: linear-gradient(#6a8ccb 50%, #fff 50%);
`

const BoxEnd = styled.button`
  display: flex;
  align-items: center;
  justify-content: flex-end;
  width: 26px;
  height: 11px;
  margin-top: 2px;
  padding-right: 2px;
  border-radius: 0 0 3px 3px;
  background: linear-gradient(90deg, #7fa8f0, #002c8c);
`

const Editor = styled.main`
  display: grid;
  flex: 1;
  min-width: 0;
  grid-template: 24px 1fr 17px / 24px 1fr;
`

const Corner = styled.div`
  border: solid #000;
  border-width: 0 1px 1px 0;
  background: #ece9d8;
`

const TopStrip = styled.div`
  overflow: hidden;
  border-right: 1px solid #000;
  border-bottom: 1px solid #000;
  background: linear-gradient(#c4dafa 20px, #ece9d8 20px);
`

const SideStrip = styled.div`
  min-height: 0;
  overflow: hidden;
  border: solid #000;
  border-width: 0 1px 1px 0;
  background: linear-gradient(90deg, #c4dafa 19px, #aca899 19px 20px, #ece9d8 20px);
`

const RulerArt = styled.svg`
  width: 100%;
  shape-rendering: crispEdges;
  text { font: 10px ${tahoma}; }
`

const Canvas = styled.div`
  min-height: 0;
  overflow: hidden;
  padding-left: 309px;
  border: solid #000;
  border-width: 0 1px 1px 0;
  background: #9099ae;
`

const Sheet = styled.article`
  position: relative;
  width: 671px;
  min-height: 100%;
  padding: 37px 46px 0 51px;
  border: solid #000;
  border-width: 0 5px 0 1px;
  background: #fff;
`

const GuideArt = styled.svg`
  position: absolute;
  inset: 0;
  width: 100%;
  height: 100%;
  shape-rendering: crispEdges;
`

const Heading = styled.h2`
  margin: 0 0 8px;
  padding-left: 8px;
  font: bold 20px/24px ${cjk};
  color: #5b9bd5;
  ${Half} { font-weight: normal; }
`

const Paragraph = styled.p`
  width: 562px;
  margin: 0 0 1px;
  font-size: 14px;
  line-height: 24px;
  font-weight: ${(p) => (p.$bold ? 'bold' : 'normal')};
  text-indent: ${(p) => (p.$bold ? 30 : 28)}px;
`

const Line = styled.span`
  display: block;
  white-space: nowrap;
  text-spacing-trim: space-all;
  ${(p) => p.$fill && css`
    text-align: justify;
    text-align-last: justify;
    white-space: normal;
  `}
  & + & { text-indent: 0; }
`

const HScroll = styled.div`
  display: flex;
  grid-column: 1 / 3;
  background: linear-gradient(#f0efe8, #fefefb);
`

const VScroll = styled.div`
  display: flex;
  flex-direction: column;
  width: 17px;
  background: linear-gradient(90deg, #f0efe8, #fefefb);
`

const ScrollButton = styled.button`
  display: grid;
  place-items: center;
  flex: none;
  width: 17px;
  height: 17px;
  border: 1px solid #fff;
  border-radius: 3px;
  background: linear-gradient(135deg, #dbe6fe, #b4c8f6);
  box-shadow: inset 0 0 0 1px #b0c4f0;
`

const Track = styled.span`
  flex: ${(p) => p.$grow} 1 0;
`

const Thumb = styled(Track)`
  display: grid;
  place-items: center;
  border: 1px solid #fff;
  border-radius: 2px;
  background: linear-gradient(${(p) => (p.$across ? '180deg' : '90deg')}, #c9d8fc, #bacdfb);
  box-shadow: inset 0 0 0 1px #a9c0f2;
  &::after {
    content: '';
    width: 7px;
    height: 7px;
    background: repeating-linear-gradient(${(p) => (p.$across ? '90deg' : '180deg')}, #eef4fe 0 1px, #8cb0f8 1px 2px);
  }
`

const ScrollCorner = styled.span`
  height: 17px;
  background: #ece9d8;
`

const PageBar = styled.div`
  display: flex;
  align-items: flex-end;
  flex: none;
  height: 27px;
  padding-left: 45px;
`

const PageTab = styled.button`
  position: relative;
  width: 22px;
  height: 20px;
  border: solid #000080;
  border-width: 1px 0 1px 1px;
  font: 10px/18px "DejaVu Sans", sans-serif;
  background: ${(p) => (p.$on ? '#ffc073' : '#fff')};
  &::after {
    content: '';
    position: absolute;
    top: -1px;
    right: 0;
    width: 5px;
    height: 5px;
    border: solid #000080;
    border-width: 0 0 1px 1px;
    background: linear-gradient(45deg, #fff 50%, #000080 50% 60%, #9ebef5 60%);
  }
  &:nth-child(25) { border-right-width: 1px; }
`

const Status = styled.div`
  display: flex;
  align-items: center;
  align-self: center;
  margin-left: auto;
  padding-right: 153px;
`

const Position = styled.span`
  margin: 6px 24px 0 20px;
  font: 10px/14px ${tahoma};
  white-space: nowrap;
`

const TaskBar = styled.footer`
  display: flex;
  align-items: center;
  flex: none;
  height: 30px;
  background: linear-gradient(#1941a5 0, #3a80f0 2px, #2b62e0 5px, #245ddb 20px, #245ddb 26px, #1b48b8 30px);
`

const Start = styled.button`
  display: flex;
  align-items: center;
  gap: 7px;
  width: 97px;
  height: 30px;
  margin-right: 8px;
  padding-left: 10px;
  border-radius: 0 10px 10px 0;
  font: italic 19px/26px ${cjk};
  color: #fff;
  text-shadow: 1px 1px 1px #1c4a18;
  background: linear-gradient(#2f7a2c, #6db86a 3px, #3c9a3a 8px, #388f36 22px, #2b6e29);
`

const Quick = styled.button`
  display: grid;
  place-items: center;
  width: 23px;
  height: 24px;
`

const QuickMore = styled(Quick)`
  width: 24px;
  align-items: start;
  padding-top: 4px;
  margin-right: 1px;
`

const Task = styled.button`
  display: flex;
  align-items: center;
  gap: 5px;
  flex: 0 1 158px;
  height: 25px;
  margin-right: 2px;
  padding-left: 8px;
  border-radius: 2px;
  color: #fff;
  white-space: nowrap;
  overflow: hidden;
  background: ${(p) => (p.$on
    ? 'linear-gradient(#153c92, #1e50b8 4px, #1e52b8)'
    : 'linear-gradient(#5f9bfa, #3c82f4 4px, #3a7ef0 20px, #2f6ddc)')};
`

const Input = styled.span`
  margin: 0 12px 0 auto;
`

const Tray = styled.div`
  position: relative;
  display: flex;
  align-items: center;
  gap: 3px;
  height: 30px;
  padding: 0 14px 0 8px;
  border-left: 1px solid #0b3ea0;
  background: linear-gradient(#0c6ec9, #19b4f4 3px, #129ae8 8px, #0f90e8 24px, #0d6fc4);
  color: #fff;
`

const TrayArrow = styled.button`
  position: absolute;
  left: -9px;
  display: grid;
  place-items: center;
  width: 18px;
  height: 18px;
  border-radius: 50%;
  background: radial-gradient(circle at 35% 30%, #7cc8fa, #1a72dc 70%);
`

const Clock = styled.time`
  margin-left: 2px;
`

const Cursor = styled.svg`
  position: absolute;
  left: 1216px;
  top: 531px;
`
